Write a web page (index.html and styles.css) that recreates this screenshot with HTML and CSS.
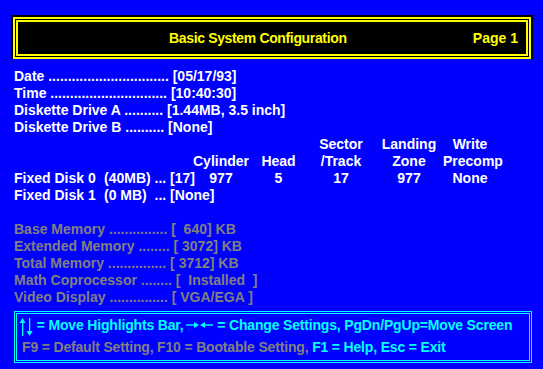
FILE: index.html
```html
<!DOCTYPE html>
<html lang="en">

<head>
  <meta charset="UTF-8">
  <title>Basic System Configuration</title>
  <link rel="stylesheet" href="styles.css">
</head>

<body>
  <div class="title-bar">
    <div class="title-frame">
      <span class="title">Basic System Configuration</span>
      <span class="page">Page 1</span>
    </div>
  </div>

  <div class="setup">
    <div class="row">Date ............................... [05/17/93]</div>
    <div class="row">Time .............................. [10:40:30]</div>
    <div class="row">Diskette Drive A .......... [1.44MB, 3.5 inch]</div>
    <div class="row">Diskette Drive B .......... [None]</div>

    <div class="disk">
      <div class="col-sector">Sector</div>
      <div>Landing</div>
      <div>Write</div>
      <div class="col-cyl">Cylinder</div>
      <div>Head</div>
      <div>/Track</div>
      <div>Zone</div>
      <div>Precomp</div>
      <div class="drive"><span class="drive-name">Fixed Disk 0</span>(40MB) ... [17]</div>
      <div>977</div>
      <div>5</div>
      <div>17</div>
      <div>977</div>
      <div>None</div>
      <div class="drive"><span class="drive-name">Fixed Disk 1</span>(0 MB)  ... [None]</div>
    </div>

    <div class="memory">
      <div class="row">Base Memory ............... [  640] KB</div>
      <div class="row">Extended Memory ........ [ 3072] KB</div>
      <div class="row">Total Memory ............... [ 3712] KB</div>
      <div class="row">Math Coprocessor ........ [  Installed  ]</div>
      <div class="row">Video Display ............... [ VGA/EGA ]</div>
    </div>
  </div>

  <div class="help">
    <div class="help-line"><svg class="updown" width="14" height="18" viewBox="0 0 14 18">
        <polygon points="3.5,0 0.5,5 6.5,5" />
        <rect x="3" y="4" width="1.3" height="14" />
        <rect x="10" y="0" width="1.3" height="14" />
        <polygon points="10.6,18 7.6,13 13.6,13" />
      </svg> = Move Highlights Bar,<svg class="leftright" width="27" height="8" viewBox="0 0 27 8">
        <rect x="0" y="3.3" width="10" height="1.4" />
        <polygon points="13,4 8,1 8,7" />
        <polygon points="14,4 19,1 19,7" />
        <rect x="17" y="3.3" width="10" height="1.4" />
      </svg> = Change Settings, PgDn/PgUp=Move Screen</div>
    <div class="help-line second"><span class="dim">F9 = Default Setting, F10 = Bootable Setting, </span>F1 = Help, Esc = Exit</div>
  </div>
</body>

</html>
```

FILE: styles.css
```css
body {
  --blue: #0000ff;
  --white: #ffffff;
  --gray: #808080;
  --yellow: #ffff00;
  --cyan: #00ffff;

  margin: 0;
  background-color: var(--blue);
  color: var(--white);
  font-family: "Liberation Sans", Arial, sans-serif;
  font-size: 14px;
  font-weight: bold;
}

.title-bar {
  margin: 15px 10px 0 11px;
  padding: 2px;
  height: 40px;
  background-color: #000;
}

.title-frame {
  height: 30px;
  border: 5px double var(--yellow);
  padding: 2px 8px 0 151px;
  line-height: 28px;
  color: var(--yellow);
  display: flex;
  justify-content: space-between;
}

.title {
  letter-spacing: -0.35px;
}

.setup {
  margin-top: 9px;
  padding-left: 14px;
  line-height: 17px;
}

.row {
  white-space: pre;
}

.disk {
  display: grid;
  grid-template-columns: 178px 58px 57px 68px 68px 54px;
  text-align: center;
  margin-bottom: 17px;
}

.disk .col-sector {
  grid-column: 4;
}

.disk .col-cyl {
  grid-column: 2;
}

.disk .drive {
  grid-column: 1;
  text-align: left;
  white-space: pre;
}

.drive-name {
  display: inline-block;
  width: 90px;
}

.memory {
  color: var(--gray);
}

.help {
  margin: 5px 11px 0 14px;
  border: 3px double var(--cyan);
  padding: 0 4px 2px 2px;
  color: var(--cyan);
  line-height: 22px;
  letter-spacing: -0.17px;
}

.help-line {
  white-space: pre;
}

.help-line.second {
  padding-left: 3px;
}

.help svg {
  fill: var(--cyan);
}

.updown {
  vertical-align: -6px;
}

.leftright {
  vertical-align: 1px;
  margin: 0 1px 0 2px;
}

.dim {
  color: var(--gray);
}
```
